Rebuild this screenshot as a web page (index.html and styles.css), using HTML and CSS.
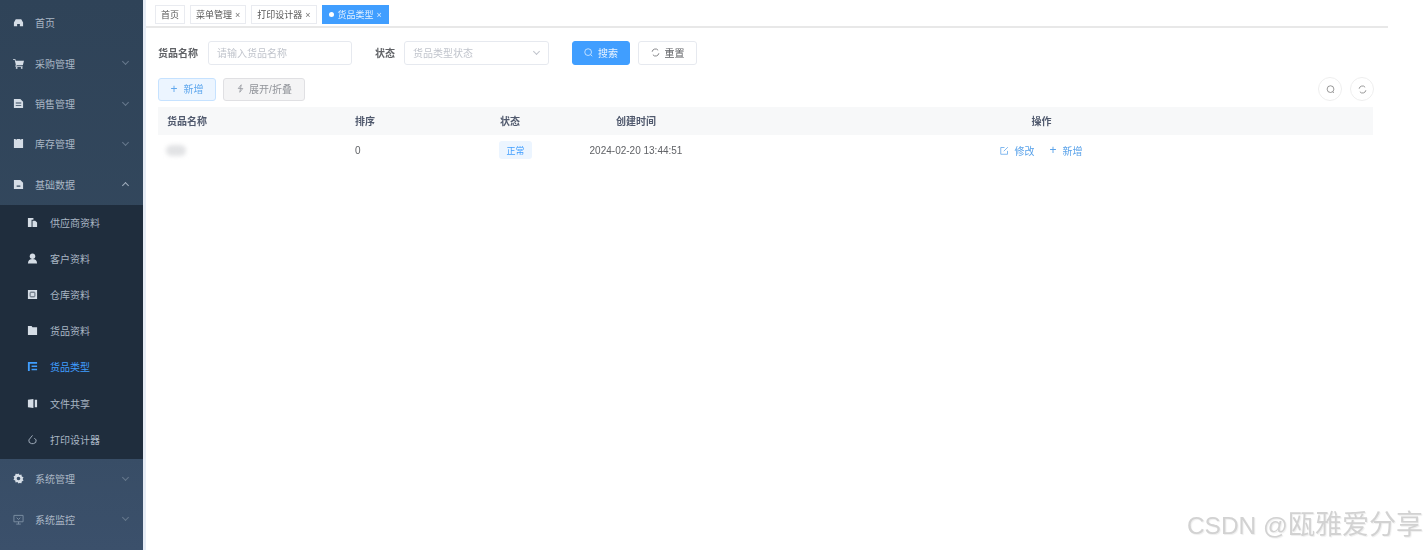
FILE: index.html
```html
<!DOCTYPE html>
<html lang="zh">
<head>
<meta charset="utf-8">
<title>货品类型</title>
<link rel="stylesheet" href="styles.css">
</head>
<body>
<div class="app">
  <aside class="side">
    <div class="item first"><svg class="ic" viewBox="0 0 12 12"><path d="M1 10V6l2-3.500h6L11 6v4H7.500V7.500h-3V10z"/></svg><span>首页</span></div>
    <div class="item"><svg class="ic" viewBox="0 0 12 12"><path d="M0 1h2.500l.5 2h9l-1.200 4.500H4L3.800 8.500H10.500V9.500H2.500L3 7 1.800 2H0z"/><circle cx="4" cy="10.800" r="1"/><circle cx="9.500" cy="10.800" r="1"/></svg><span>采购管理</span><i class="chev"></i></div>
    <div class="item"><svg class="ic" viewBox="0 0 12 12"><path fill-rule="evenodd" d="M1 1h7l3 3v7H1zM3 5v1h6V5zM3 7.500v1h6v-1z"/></svg><span>销售管理</span><i class="chev"></i></div>
    <div class="item"><svg class="ic" viewBox="0 0 12 12"><path d="M1 1h2v1h1V1h4v1h1V1h2v10H1z"/></svg><span>库存管理</span><i class="chev"></i></div>
    <div class="item"><svg class="ic" viewBox="0 0 12 12"><path fill-rule="evenodd" d="M1 1h7l3 3v7H1zM4 7v1.500h4V7z"/></svg><span>基础数据</span><i class="chev up"></i></div>
    <div class="sub">
      <div class="subitem"><svg class="ic" viewBox="0 0 12 12"><path d="M1 1h6v2H5v8H1z"/><path d="M6 4h3l2 2v5H6z"/></svg><span>供应商资料</span></div>
      <div class="subitem"><svg class="ic" viewBox="0 0 12 12"><circle cx="6" cy="3.500" r="3"/><path d="M1 11.500c0-3.500 2-5 5-5s5 1.500 5 5z"/></svg><span>客户资料</span></div>
      <div class="subitem"><svg class="ic" viewBox="0 0 12 12"><path fill-rule="evenodd" d="M1 1h10v10H1zM3 3v.7h6V3zM3 3v6h.7V3zM8.300 3v6H9V3zM3 8.300V9h6v-.7z"/></svg><span>仓库资料</span></div>
      <div class="subitem"><svg class="ic" viewBox="0 0 12 12"><path d="M1 1h4l1 1.500h5V11H1z"/></svg><span>货品资料</span></div>
      <div class="subitem active"><svg class="ic" viewBox="0 0 12 12"><path d="M1 1h10v2H1zM1 1h2v10H1zM5 5h6v1.500H5zM5 8.500h6V10H5z"/></svg><span>货品类型</span></div>
      <div class="subitem"><svg class="ic" viewBox="0 0 12 12"><path d="M1 2l6-1v10l-6-1zM8.500 2H11v8H8.500z"/></svg><span>文件共享</span></div>
      <div class="subitem"><svg class="ic line" viewBox="0 0 12 12"><path d="M6 1.500 2 6.500a3.500 3.500 0 0 0 3 4h2a3.500 3.500 0 0 0 3-4L8 4.500"/></svg><span>打印设计器</span></div>
    </div>
    <div class="item"><svg class="ic" viewBox="0 0 12 12"><path fill-rule="evenodd" d="M6 .5l1.200 1.700 2-.5.400 2 1.900 1-1 1.800 1 1.800-1.900 1-.4 2-2-.5L6 11.500l-1.200-1.700-2 .5-.4-2-1.900-1 1-1.800-1-1.800 1.900-1 .4-2 2 .5zM6 4a2 2 0 1 0 0 4 2 2 0 0 0 0-4z"/></svg><span>系统管理</span><i class="chev"></i></div>
    <div class="item"><svg class="ic line dim" viewBox="0 0 12 12"><path d="M1 1.500h10v7H1zM6 8.500V11M3.500 11h5M4 4l2 2 2-2"/></svg><span>系统监控</span><i class="chev"></i></div>
  </aside>
  <main class="main">
    <div class="tags">
      <span class="tag">首页</span>
      <span class="tag">菜单管理<em>×</em></span>
      <span class="tag">打印设计器<em>×</em></span>
      <span class="tag on"><b></b>货品类型<em>×</em></span>
    </div>
    <div class="page">
      <form class="filters">
        <label class="lbl">货品名称</label>
        <div class="input name">请输入货品名称</div>
        <label class="lbl status">状态</label>
        <div class="input sel">货品类型状态<i class="chev"></i></div>
        <div class="btn primary"><svg class="bi" viewBox="0 0 12 12"><circle cx="5.500" cy="5.500" r="4.500"/><path d="M9 9 11 11"/></svg>搜索</div>
        <div class="btn reset"><svg class="bi" viewBox="0 0 12 12"><path d="M1.500 5a4.500 4.500 0 0 1 8-2M10.500 7a4.500 4.500 0 0 1-8 2"/></svg>重置</div>
      </form>
      <div class="tools">
        <div class="mini add"><span class="plus">+</span>新增</div>
        <div class="mini fold"><svg class="bi" viewBox="0 0 12 12"><path d="M7 1 3 6h3l-1 5 4-5H6z"/></svg>展开/折叠</div>
        <div class="round first-round"><svg class="bi" viewBox="0 0 12 12"><circle cx="6" cy="5.500" r="4.500"/><path d="M9 9 10.500 10.500"/></svg></div>
        <div class="round last-round"><svg class="bi" viewBox="0 0 12 12"><path d="M1.500 5a4.500 4.500 0 0 1 8-2M10.500 7a4.500 4.500 0 0 1-8 2"/></svg></div>
      </div>
      <div class="table">
        <div class="row head">
          <span class="c1">货品名称</span><span class="c2">排序</span><span class="c3">状态</span><span class="c4">创建时间</span><span class="c5">操作</span>
        </div>
        <div class="row body">
          <span class="c1"><i class="smudge"></i></span>
          <span class="c2">0</span>
          <span class="c3"><span class="pill">正常</span></span>
          <span class="c4">2024-02-20 13:44:51</span>
          <span class="c5 acts"><svg class="bi edit" viewBox="0 0 12 12"><path d="M10 6.500V11H1V2h5M5 7l5.500-5.500"/></svg>修改<span class="plus gap">+</span>新增</span>
        </div>
      </div>
    </div>
  </main>
  <div class="gutter"></div>
</div>
<div class="mark">CSDN @<span class="cjk">瓯雅爱分享</span></div>
</body>
</html>
```

FILE: styles.css
```css
* { box-sizing: border-box; }
html, body { margin: 0; height: 550px; overflow: hidden; background: #fff; }
body { font-family: "Liberation Sans", "Noto Sans CJK SC", sans-serif; font-size: 10px; color: #606266; }
.app { display: flex; height: 550px; filter: blur(.55px); }

.side { width: 143px; flex: none; height: 550px; background: linear-gradient(#2f4358, #34495f 60%, #3b506b); color: #aab7c5; overflow: hidden; }
.item { height: 40.400px; display: flex; align-items: center; padding-left: 13px; position: relative; }
.item.first { height: 43px; padding-top: 1px; }
.item span { margin-left: 11px; }
.ic { width: 11px; height: 11px; flex: none; fill: #d5dde6; }
.ic.line { fill: none; stroke: #aab6c4; stroke-width: 1; }
.ic.dim { stroke: #7e90a4; }
.chev { position: absolute; right: 15px; top: 50%; width: 5px; height: 5px; margin-top: -4px; border: solid #66788c; border-width: 0 1px 1px 0; transform: rotate(45deg); }
.chev.up { margin-top: -1px; transform: rotate(225deg); border-color: #a0aebd; }
.sub { background: #1f2d3d; height: 254px; }
.subitem { height: 36.100px; display: flex; align-items: center; padding-left: 27px; }
.subitem span { margin-left: 12px; }
.subitem.active, .subitem.active .ic { color: #409eff; fill: #409eff; }

.main { width: 1245px; flex: none; border-left: 3px solid #e6ecf5; }
.gutter { flex: 1; }
.tags { height: 28px; display: flex; gap: 5px; align-items: flex-start; padding: 5px 0 0 9px; border-bottom: 2px solid #e8e8e8; }
.tag { height: 19px; border: 1px solid #e9ebf0; padding: 0 5px; display: inline-flex; align-items: center; font-size: 9px; color: #555; }
.tag em { font-style: normal; margin-left: 3px; color: #777; }
.tag.on { background: #409eff; border-color: #409eff; color: #e4f1ff; padding: 0 6px; }
.tag.on em { color: #d5e9ff; }
.tag.on b { width: 5px; height: 5px; border-radius: 50%; background: #fff; margin-right: 4px; }

.page { padding: 13px 15px 0 12px; }
.filters { display: flex; align-items: center; height: 24px; }
.lbl { font-weight: 700; color: #606266; width: 50px; padding-bottom: 1px; }
.input { height: 24px; padding-bottom: 1px; border: 1px solid #e6e9ef; border-radius: 3px; color: #c0c4cc; display: flex; align-items: center; padding-left: 8px; position: relative; }
.input.name { width: 144px; }
.lbl.status { margin-left: 23px; width: 29px; }
.input.sel { width: 145px; }
.input .chev { right: 9px; border-color: #c0c4cc; }
.btn { height: 24px; width: 58px; padding-bottom: 1px; margin-left: 23px; border: 1px solid #e6e9ef; border-radius: 3px; display: flex; align-items: center; justify-content: center; gap: 5px; color: #606266; }
.btn.reset { margin-left: 8px; width: 59px; }
.btn.primary { background: #409eff; border-color: #409eff; color: #eaf4ff; }
.bi { width: 9px; height: 9px; flex: none; fill: none; stroke: currentColor; stroke-width: 1; }

.tools { display: flex; align-items: center; height: 24px; margin-top: 12px; }
.mini { height: 23px; padding-bottom: 1px; border-radius: 3px; display: flex; align-items: center; justify-content: center; border: 1px solid; }
.mini.add { width: 58px; background: #ecf5ff; border-color: #c6e2ff; color: #60a8ee; gap: 6px; }
.mini.fold { width: 82px; margin-left: 7px; background: #f4f4f5; border-color: #e0e0e3; color: #909399; gap: 4px; }
.plus { font-size: 12px; line-height: 1; }
.round { width: 24px; height: 24px; border: 1px solid #eee; border-radius: 50%; display: flex; align-items: center; justify-content: center; margin-left: 8px; color: #777; }
.first-round { margin-left: auto; }
.last-round { margin-right: -1px; }

.table { margin-top: 6px; }
.row { display: flex; align-items: center; }
.row span[class^="c"] { flex: none; }
.row.head { height: 28px; padding-bottom: 2px; background: #f7f8f9; font-weight: 700; color: #515a6e; }
.row.body { height: 30px; color: #606266; }
.c1 { width: 197px; padding-left: 9px; }
.c2 { width: 145px; }
.c3 { width: 80px; }
.c4 { width: 112px; text-align: center; }
.c5 { width: 681px; padding-left: 18px; text-align: center; }
.smudge { display: block; width: 20px; height: 11px; margin-left: -1px; border-radius: 6px; background: #e2e3e5; filter: blur(2px); }
.pill { display: inline-flex; align-items: center; justify-content: center; width: 33px; height: 18px; margin-left: -1px; border-radius: 3px; background: #ecf5ff; color: #409eff; font-size: 9px; }
.acts { color: #5ba3ea; display: flex; align-items: center; justify-content: center; gap: 3px; }
.edit { margin-right: 2px; }
.gap { margin-left: 12px; margin-right: 3px; }

.mark { position: absolute; right: 5px; bottom: 10px; font-size: 24.500px; line-height: 28px; color: #d2d2d2; text-shadow: 1px 1px 1px #eee; }
.cjk { font-size: 27px; }
```
